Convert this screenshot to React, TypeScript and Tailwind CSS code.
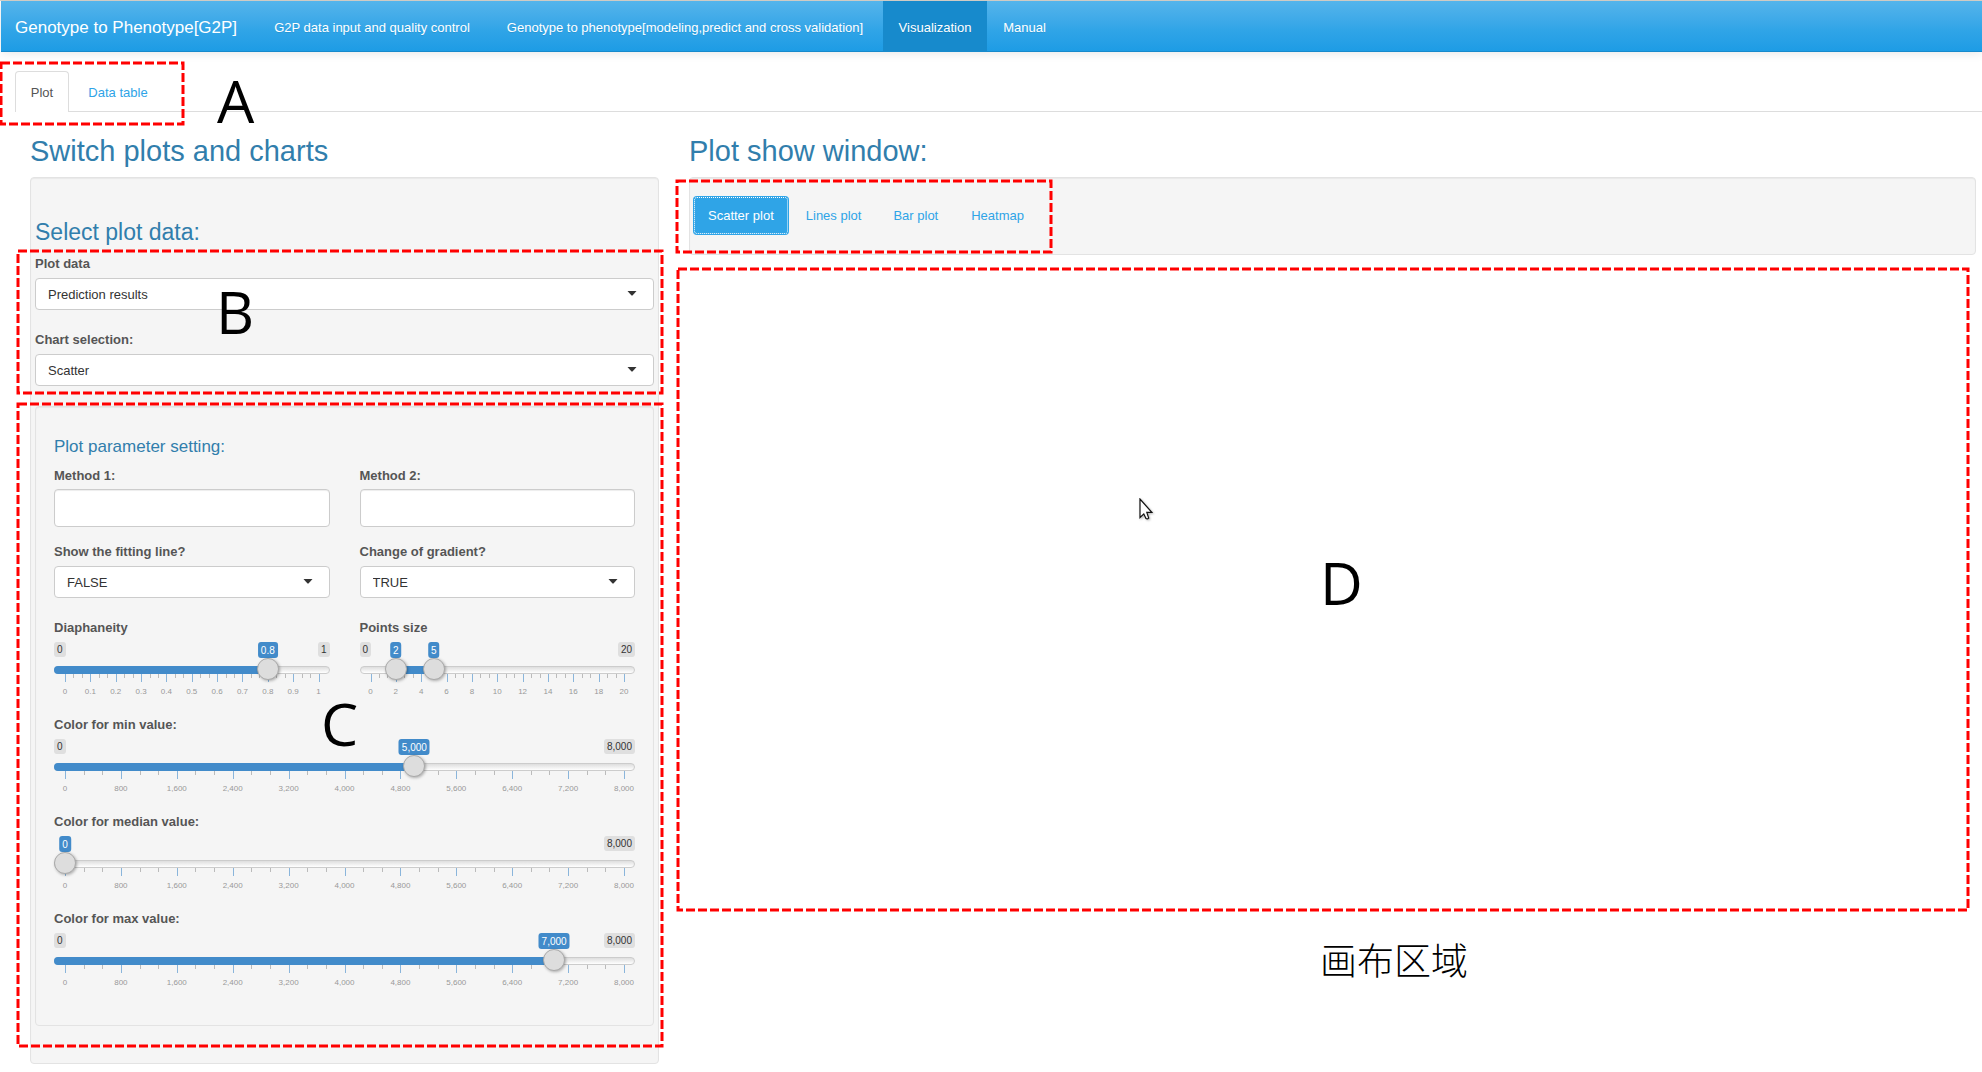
import { useState } from "react";
import type { ReactNode } from "react";

const SANS = "font-['Liberation_Sans',Arial,sans-serif]";

function DashedFrame({ className }: { className: string }) {
  return (
    <svg aria-hidden="true" className={`pointer-events-none absolute z-10 overflow-visible ${className}`}>
      <rect width="100%" height="100%" fill="none" stroke="#ff0000" strokeWidth="3" strokeDasharray="9 3" />
    </svg>
  );
}

function Mark({ className, children }: { className: string; children: ReactNode }) {
  return (
    <span
      className={`pointer-events-none absolute z-10 font-['Open_Sans','Noto_Sans',sans-serif] text-[59px] leading-[60px] font-medium text-black ${className}`}
    >
      {children}
    </span>
  );
}

function SelectField({ id, label, options }: { id: string; label: string; options: string[] }) {
  return (
    <div className="h-[76px]">
      <label htmlFor={id} className="block h-6 text-[13px] leading-5 font-bold text-[#555]">
        {label}
      </label>
      <div className="relative">
        <select
          id={id}
          className="block h-8 w-full appearance-none rounded border border-[#ccc] bg-white px-3 pt-[2px] text-[13px] text-[#333]"
        >
          {options.map((o) => (
            <option key={o}>{o}</option>
          ))}
        </select>
        <svg aria-hidden="true" viewBox="0 0 10 5" className="pointer-events-none absolute top-[13px] right-[17px] h-[5px] w-[10px]">
          <path d="M0.5 0h9L5.5 4.5h-1z" fill="#333" />
        </svg>
      </div>
    </div>
  );
}

function TextField({ id, label }: { id: string; label: string }) {
  return (
    <div className="h-[76px]">
      <label htmlFor={id} className="block h-[23px] text-[13px] leading-5 font-bold text-[#555]">
        {label}
      </label>
      <input
        id={id}
        type="text"
        className="block h-[38px] w-full rounded border border-[#ccc] bg-white px-3 text-[13px] text-[#333] shadow-[inset_0_1px_1px_rgba(0,0,0,0.075)]"
      />
    </div>
  );
}

const THUMB =
  "pointer-events-none absolute top-4 left-0 z-[1] m-0 h-[22px] w-full appearance-none bg-transparent [&::-webkit-slider-thumb]:pointer-events-auto [&::-webkit-slider-thumb]:h-[22px] [&::-webkit-slider-thumb]:w-[22px] [&::-webkit-slider-thumb]:appearance-none [&::-webkit-slider-thumb]:rounded-full [&::-webkit-slider-thumb]:border [&::-webkit-slider-thumb]:border-[#aaa] [&::-webkit-slider-thumb]:bg-[#ddd] [&::-webkit-slider-thumb]:shadow-[1px_1px_3px_rgba(0,0,0,0.3)]";

interface SliderProps {
  id: string;
  label: string;
  max: number;
  step: number;
  initial: number[];
  hideMin?: boolean;
}

function SliderField({ id, label, max, step, initial, hideMin }: SliderProps) {
  const [values, setValues] = useState(initial);
  const fmt = (n: number) => n.toLocaleString("en-US", { maximumFractionDigits: 1 });
  const at = (n: number) => `calc(11px + (100% - 22px) * ${n / max})`;
  const low = values.length > 1 ? values[0] : null;
  const high = values[values.length - 1];
  return (
    <div className="h-[97px]">
      <label htmlFor={`${id}-0`} className="block h-6 text-[13px] leading-5 font-bold text-[#555]">
        {label}
      </label>
      <div className="relative h-14">
        <div className="flex justify-between text-[10px] leading-[15px] text-[#333]">
          <span className={`rounded-[3px] bg-[#dfdfdf] px-[3px] ${hideMin ? "invisible" : ""}`}>0</span>
          <span className="rounded-[3px] bg-[#dfdfdf] px-[3px]">{fmt(max)}</span>
        </div>
        <div className="absolute inset-x-0 top-6 h-2 overflow-hidden rounded-full border border-[#ccc] bg-linear-to-b from-[#dedede] to-white" />
        {(low !== null || high > 0) && (
          <div
            className={`absolute top-6 h-2 bg-[#428bca] ${low === null ? "rounded-l-full" : ""}`}
            style={{ left: low === null ? 0 : at(low), right: `calc(100% - (${at(high).slice(4)})` }}
          />
        )}
        {values.map((v, i) => (
          <span
            key={i}
            className="absolute top-0 -translate-x-1/2 rounded-[3px] bg-[#428bca] px-[3px] pt-px text-[10px] leading-[15px] text-white"
            style={{ left: at(v) }}
          >
            {fmt(v)}
          </span>
        ))}
        {values.map((v, i) => (
          <input
            key={i}
            id={`${id}-${i}`}
            aria-label={i > 0 ? `${label} (upper)` : undefined}
            type="range"
            min={0}
            max={max}
            step={step}
            value={v}
            onChange={(e) => setValues(values.map((old, j) => (j === i ? Number(e.target.value) : old)))}
            className={THUMB}
          />
        ))}
        <div className="absolute inset-x-[11px] top-8 h-6">
          {Array.from({ length: 31 }, (_, i) => (
            <span
              key={i}
              className={`absolute top-0 w-px ${i % 3 === 0 ? "h-2 bg-[#428bca]/60" : "h-1 bg-[#bbb]"}`}
              style={{ left: `${(i / 30) * 100}%` }}
            />
          ))}
          {Array.from({ length: 11 }, (_, i) => (
            <span
              key={i}
              className="absolute top-[13px] -translate-x-1/2 text-[8px] leading-[10px] text-[#999]"
              style={{ left: `${i * 10}%` }}
            >
              {fmt((max * i) / 10)}
            </span>
          ))}
        </div>
      </div>
    </div>
  );
}

const WELL = "rounded border border-[#e3e3e3] bg-[#f5f5f5] shadow-[inset_0_1px_1px_rgba(0,0,0,0.05)]";
const NAV =
  "flex items-center justify-center pt-[3px] text-[13px] text-white [text-shadow:0_1px_0_rgba(0,0,0,0.1)] whitespace-nowrap";

export default function App() {
  return (
    <div className={`relative min-h-screen overflow-hidden bg-white text-[#555] ${SANS}`}>
      <header className="border-t border-[#d8d4cc] pl-px">
        <nav className="flex h-[51px] border-b border-[#178acc] bg-linear-to-b from-[#54b4eb] via-[#2fa4e7] via-60% to-[#1d9ce5] shadow-[0_1px_10px_rgba(0,0,0,0.1)]">
          <a href="#" className="flex w-[256px] items-center pt-[3px] pl-[14px] text-[17px] whitespace-nowrap text-white">
            Genotype to Phenotype[G2P]
          </a>
          <a href="#input" className={`${NAV} w-[230px]`}>
            G2P data input and quality control
          </a>
          <a href="#model" className={`${NAV} w-[396px]`}>
            Genotype to phenotype[modeling,predict and cross validation]
          </a>
          <a href="#visualization" aria-current="page" className={`${NAV} w-[104px] bg-[#178acc]`}>
            Visualization
          </a>
          <a href="#manual" className={`${NAV} w-[75px]`}>
            Manual
          </a>
        </nav>
      </header>

      <div className="relative mt-[19px] ml-[15px] flex h-[41px] border-b border-[#ddd] text-[13px]">
        <button
          type="button"
          className="-mb-px h-[41px] w-[54px] rounded-t border border-b-0 border-[#ddd] bg-white pt-[2px] text-[#555]"
        >
          Plot
        </button>
        <button type="button" className="ml-[2px] h-[41px] w-[94px] pt-[2px] text-[#2fa4e7]">
          Data table
        </button>
        <DashedFrame className="-top-2 -left-[14px] h-[61px] w-[182px]" />
        <Mark className="-top-px left-[202px]">A</Mark>
      </div>

      <div className="grid grid-cols-[629fr_1287fr] gap-[30px] pr-[6px] pl-[30px]">
        <section>
          <h2 className="pt-[23px] text-[29px] leading-8 text-[#317eac]">Switch plots and charts</h2>
          <div className={`relative mt-[10px] p-1 pb-[37px] ${WELL}`}>
            <h3 className="mt-9 text-[23px] leading-7 text-[#317eac]">Select plot data:</h3>
            <div className="mt-2">
              <SelectField id="plot-data" label="Plot data" options={["Prediction results", "Genotype data"]} />
              <SelectField id="chart" label="Chart selection:" options={["Scatter", "Lines", "Bar", "Heatmap"]} />
            </div>
            <div className={`px-[18px] pt-7 ${WELL}`}>
              <h4 className="text-[17px] leading-6 text-[#317eac]">Plot parameter setting:</h4>
              <div className="mt-[7px] grid grid-cols-2 gap-x-[30px]">
                <TextField id="method-1" label="Method 1:" />
                <TextField id="method-2" label="Method 2:" />
                <SelectField id="fitting" label="Show the fitting line?" options={["FALSE", "TRUE"]} />
                <SelectField id="gradient" label="Change of gradient?" options={["TRUE", "FALSE"]} />
                <SliderField id="diaphaneity" label="Diaphaneity" max={1} step={0.1} initial={[0.8]} />
                <SliderField id="points" label="Points size" max={20} step={1} initial={[2, 5]} />
              </div>
              <SliderField id="min" label="Color for min value:" max={8000} step={100} initial={[5000]} />
              <SliderField id="median" label="Color for median value:" max={8000} step={100} initial={[0]} hideMin />
              <SliderField id="max" label="Color for max value:" max={8000} step={100} initial={[7000]} />
              <div className="h-[19px]" />
            </div>
            <DashedFrame className="top-[73px] -left-[13px] h-[142px] w-[calc(100%+17px)]" />
            <DashedFrame className="top-[226px] -left-[13px] h-[642px] w-[calc(100%+17px)]" />
            <Mark className="top-[103px] left-[185px]">B</Mark>
            <Mark className="top-[515px] left-[290px]">C</Mark>
          </div>
        </section>

        <section>
          <h2 className="pt-[23px] text-[29px] leading-8 text-[#317eac]">Plot show window:</h2>
          <div className={`relative mt-[10px] h-[78px] px-[3px] pt-[18px] ${WELL}`}>
            <div className="flex h-[39px] gap-[2px] text-[13px] text-[#2fa4e7]">
              <button
                type="button"
                className="rounded bg-[#2fa4e7] px-[15px] pt-px text-white outline-1 -outline-offset-2 outline-dotted outline-white"
              >
                Scatter plot
              </button>
              <button type="button" className="px-[15px] pt-px">
                Lines plot
              </button>
              <button type="button" className="px-[15px] pt-px">
                Bar plot
              </button>
              <button type="button" className="px-4 pt-px">
                Heatmap
              </button>
            </div>
            <DashedFrame className="top-[3px] -left-[13px] h-[71px] w-[374px]" />
          </div>
          <div className="relative mt-[14px] mr-2 -ml-[11px] h-[641px]">
            <DashedFrame className="inset-0 size-full" />
            <svg
              aria-hidden="true"
              viewBox="0 0 14 22"
              className="absolute top-[229px] left-[461px] h-[22px] w-[14px] drop-shadow-[1px_1px_1px_rgba(0,0,0,0.3)]"
            >
              <path
                d="M1 1v18.5l3.8-3.6 2.2 4.700q1.400.9 2.700-.5L7.800 14.400h5z"
                fill="#fff"
                stroke="#111"
                strokeWidth="1.2"
              />
            </svg>
            <Mark className="top-[283px] left-[calc(50%-3px)]">D</Mark>
          </div>
          <p className="mt-[29px] pl-[631px] font-['Noto_Sans_CJK_SC',sans-serif] text-[37px] leading-10 font-light text-black">
            画布区域
          </p>
        </section>
      </div>
    </div>
  );
}
